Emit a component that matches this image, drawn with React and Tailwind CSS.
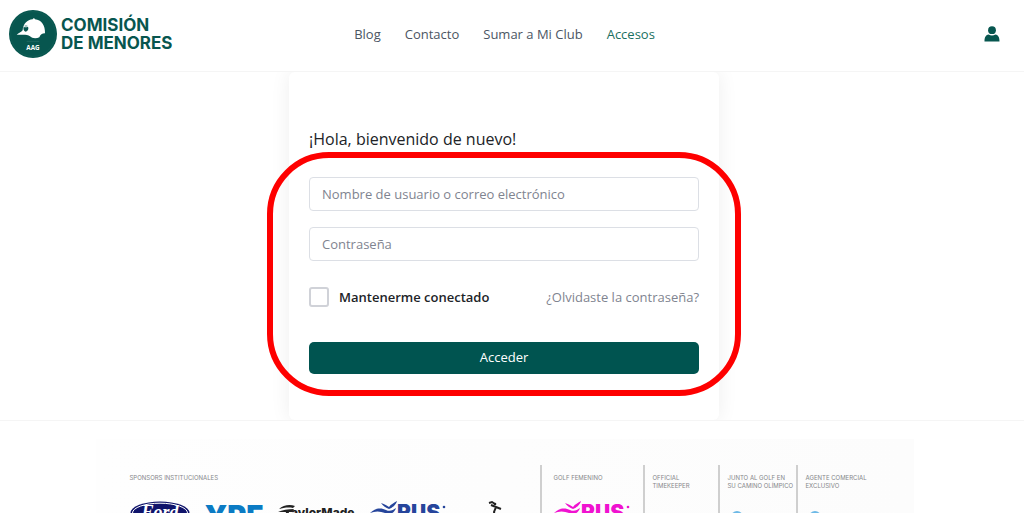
import { useState } from "react";

const navLinks = [
  { label: "Blog" },
  { label: "Contacto" },
  { label: "Sumar a Mi Club" },
  { label: "Accesos", active: true },
];

const Logo = () => (
  <a href="#" className="flex items-center gap-1" aria-label="Comisión de Menores">
    <svg className="size-12 shrink-0" viewBox="27 28 144 144">
      <circle cx="99" cy="100" r="72" fill="#07564f" />
      <circle cx="99" cy="100" r="67" fill="none" stroke="#1d665f" strokeWidth="1" />
      {/* Cap */}
      <path
        d="M50 102 C56 97 64 95 68 89 C69 70 82 57 98 56 C99 52 104 52 105 56 C124 58 136 74 135 98 C126 98 121 102 118 110 C110 114 96 114 90 107 C82 100 68 103 50 102 Z"
        fill="#fff"
      />
      <path
        d="M71 78 C74 80 79 80 84 78 C87 84 84 91 77 93 C71 91 69 84 71 78 Z"
        fill="#07564f"
      />
      <path d="M74 76 L82 76" stroke="#07564f" strokeWidth="2" />
      <path d="M80 122 H118" stroke="#4c8983" strokeWidth="1" />
      <text
        x="99"
        y="147"
        textAnchor="middle"
        fontFamily="Open Sans, sans-serif"
        fontSize="19"
        fontWeight="700"
        fill="#fff"
      >
        AAG
      </text>
    </svg>
    <span className="flex flex-col font-['Inter',sans-serif] text-[17px] leading-[18px] font-bold text-[#07564f]">
      <span>COMISIÓN</span>
      <span>DE MENORES</span>
    </span>
  </a>
);

const Header = () => (
  <header className="grid grid-cols-[1fr_auto_1fr] items-center border-b border-[#f5f5f5] pt-[10px] pr-6 pb-[13px] pl-[9px]">
    <Logo />
    <nav className="flex gap-6 text-[13px] leading-5">
      {navLinks.map((link) => (
        <a
          key={link.label}
          href="#"
          className={link.active ? "text-[#1a7061]" : "text-[#4b5563]"}
        >
          {link.label}
        </a>
      ))}
    </nav>
    <a href="#" aria-label="Mi cuenta" className="justify-self-end">
      <svg className="size-4" viewBox="0 0 16 16" fill="#07564f">
        <circle cx="8" cy="4.2" r="3.9" />
        <path d="M0.5 15.5 C0.5 11 2 9 4.6 8.6 C6.6 9.9 9.4 9.9 11.4 8.6 C14 9 15.5 11 15.5 15.5 Z" />
      </svg>
    </a>
  </header>
);

const LoginCard = () => {
  const [remember, setRemember] = useState(false);

  return (
    <div className="relative mx-auto w-full max-w-[430px] rounded-md bg-white px-5 pt-[55px] pb-[46px] shadow-[0_0_20px_rgba(0,0,0,0.07)]">
      <h1 className="text-base leading-6 text-[#212327]">
        ¡Hola, bienvenido de nuevo!
      </h1>

      <form className="mt-[26px]" onSubmit={(e) => e.preventDefault()}>
        <div className="flex flex-col gap-4">
          <input
            type="text"
            aria-label="Nombre de usuario o correo electrónico"
            placeholder="Nombre de usuario o correo electrónico"
            className="h-[34px] rounded border border-[#dcdfe5] px-3 text-[13px] placeholder:text-[#7f8490]"
          />
          <input
            type="password"
            aria-label="Contraseña"
            placeholder="Contraseña"
            className="h-[34px] rounded border border-[#dcdfe5] px-3 text-[13px] placeholder:text-[#7f8490]"
          />
        </div>

        <div className="mt-[26px] flex items-center justify-between text-[13px] leading-5">
          <label className="flex items-center gap-2.5 font-semibold text-[#212327]">
            <input
              type="checkbox"
              checked={remember}
              onChange={(e) => setRemember(e.target.checked)}
              className="size-5 appearance-none rounded-[3px] border-2 border-[#d0d2d8] checked:bg-[#005450]"
            />
            Mantenerme conectado
          </label>
          <a href="#" className="text-[#7f8490]">
            ¿Olvidaste la contraseña?
          </a>
        </div>

        <button
          type="submit"
          className="mt-[35px] h-8 w-full rounded-[5px] bg-[#005450] text-[13px] text-white"
        >
          Acceder
        </button>
      </form>

      {/* Highlight around the form fields */}
      <div className="pointer-events-none absolute -inset-x-[22px] top-20 bottom-6 rounded-[62px] border-6 border-[#fe0000]" />
    </div>
  );
};

const FordLogo = () => (
  <svg className="h-6 w-[60px]" viewBox="0 0 60 24">
    <ellipse cx="30" cy="13" rx="29.5" ry="11.5" fill="#10146b" />
    <ellipse cx="30" cy="13" rx="27.5" ry="9.8" fill="none" stroke="#fff" strokeWidth="1" />
    <text
      x="30"
      y="18"
      textAnchor="middle"
      fontFamily="Liberation Serif, serif"
      fontStyle="italic"
      fontWeight="700"
      fontSize="18"
      fill="#fff"
    >
      Ford
    </text>
  </svg>
);

const YpfLogo = () => (
  <svg className="h-7 w-[60px]" viewBox="0 0 60 28">
    <text
      x="30"
      y="26"
      textAnchor="middle"
      fontFamily="Inter, sans-serif"
      fontWeight="900"
      fontSize="29"
      fill="#0b7bc4"
    >
      YPF
    </text>
  </svg>
);

const TaylorMadeLogo = () => (
  <svg className="h-6 w-[78px]" viewBox="0 0 78 24">
    <path
      d="M1 9 C5 5 12 4 17 6 L15 8 C10 7 5 8 1 9 Z M0 12 C4 10 10 9 16 9 L14 12 H11 L9 20 H6 L8 12 Z"
      fill="#222"
    />
    <text
      x="13"
      y="17"
      fontFamily="Inter, sans-serif"
      fontWeight="800"
      fontSize="12"
      fill="#222"
    >
      aylorMade
    </text>
  </svg>
);

const RusLogo = ({ color }) => (
  <svg className="h-6 w-[78px]" viewBox="0 0 78 24">
    <path d="M11 3 C15 4 17 6 19 7 C21 4 24 3 27 1 C26 5 22 8 19 9 C16 8 13 6 11 3 Z" fill={color} />
    <path d="M0 13 C6 7 12 8 16 10 C20 12 23 10 26 8 C24 14 19 15 15 13 C10 11 5 11 0 13 Z" fill={color} />
    <text
      x="27"
      y="20"
      fontFamily="Inter, sans-serif"
      fontWeight="900"
      fontSize="21"
      fill={color}
    >
      RUS
    </text>
    <circle cx="74" cy="7" r="1.3" fill={color} />
  </svg>
);

const GolferLogo = () => (
  <svg className="h-6 w-4" viewBox="0 0 16 24">
    <path
      d="M1 3 L4 2 L7 4 M3 5 L8 7 L13 9 M8 7 L6 12 L8 20"
      fill="none"
      stroke="#222"
      strokeWidth="2"
    />
    <circle cx="7" cy="4" r="1.3" fill="#222" />
  </svg>
);

const BlueMark = () => (
  <svg className="h-6 w-8" viewBox="0 0 32 24">
    <circle cx="9" cy="17" r="6" fill="#6db9e6" />
  </svg>
);

const SponsorGroup = ({ title, className, children }) => (
  <section className={className}>
    <h2 className="h-4 font-['Inter',sans-serif] text-[6px] leading-2 whitespace-pre-line text-[#85878a]">
      {title}
    </h2>
    <div className="mt-[10px] flex">{children}</div>
  </section>
);

const Sponsors = () => (
  <footer className="min-h-0 flex-1 overflow-hidden border-t border-[#f5f5f5] pt-[18px] pr-[15px]">
    <div className="mx-auto flex max-w-[818px] bg-linear-to-r from-[#fefefe] to-[#fcfcfc] pt-[26px]">
      <SponsorGroup title="SPONSORS INSTITUCIONALES" className="flex-1 pt-[9px] pl-[34px]">
        <div className="flex gap-[14px]">
          <FordLogo />
          <YpfLogo />
          <TaylorMadeLogo />
        </div>
        <div className="ml-[14px] flex gap-10">
          <RusLogo color="#26459b" />
          <GolferLogo />
        </div>
      </SponsorGroup>
      <SponsorGroup
        title="GOLF FEMENINO"
        className="w-[103px] border-l-2 border-[#cfcfcf] pt-[9px] pl-3"
      >
        <RusLogo color="#f012d0" />
      </SponsorGroup>
      <SponsorGroup
        title={"OFFICIAL\nTIMEKEEPER"}
        className="w-[75px] border-l-2 border-[#cfcfcf] pt-[9px] pl-2"
      />
      <SponsorGroup
        title={"JUNTO AL GOLF EN\nSU CAMINO OLÍMPICO"}
        className="w-[78px] border-l-2 border-[#cfcfcf] pt-[9px] pl-2"
      >
        <BlueMark />
      </SponsorGroup>
      <SponsorGroup
        title={"AGENTE COMERCIAL\nEXCLUSIVO"}
        className="w-[118px] border-l-2 border-[#cfcfcf] pt-[9px] pl-2"
      >
        <BlueMark />
      </SponsorGroup>
    </div>
  </footer>
);

const App = () => {
  return (
    <div className="flex h-screen flex-col overflow-hidden bg-white font-['Open_Sans',sans-serif]">
      <Header />
      <main className="overflow-hidden pr-4">
        <LoginCard />
      </main>
      <Sponsors />
    </div>
  );
};

export default App;
